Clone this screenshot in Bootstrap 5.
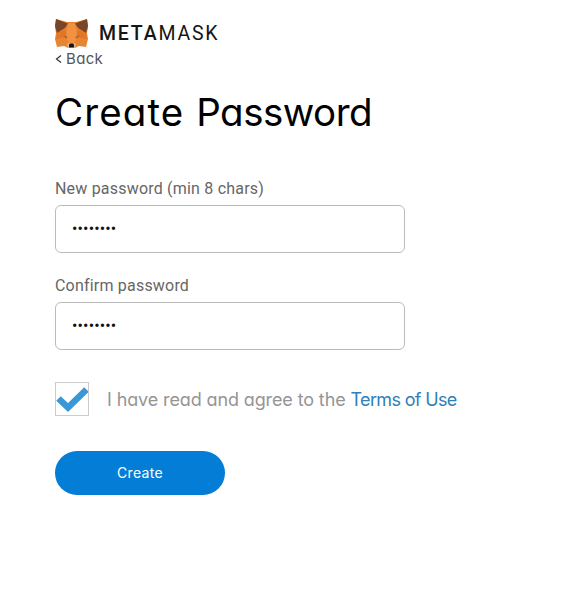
<!DOCTYPE html>
<html lang="en">
<head>
  <meta charset="UTF-8" />
  <meta name="viewport" content="width=device-width, initial-scale=1.0"/>
  <title>MetaMask</title>
  <link href="https://cdn.jsdelivr.net/npm/bootstrap@5.3.2/dist/css/bootstrap.min.css" rel="stylesheet" />
  <style>
    body {
      background-color: #fff;
      font-family: Inter, "Liberation Sans", sans-serif;
      font-feature-settings: "cv11";
    }
    .page {
      width: 403px;
      margin-left: 55px;
      padding-top: 17px;
    }
    .brand {
      height: 32px;
      gap: 11px;
    }
    .brand-name {
      padding-top: 2px;
      font-family: Roboto, sans-serif;
      font-size: 19.5px;
      line-height: 30px;
      letter-spacing: 1.8px;
      color: #161616;
    }
    .brand-meta {
      font-weight: 500;
    }
    .back-link {
      height: 20px;
      gap: 4px;
      font-size: 15px;
      line-height: 20px;
      letter-spacing: .35px;
      color: #555;
    }
    .page-title {
      margin: 19px 0 43px;
      font-size: 38.5px;
      line-height: 48px;
      font-weight: 400;
      white-space: nowrap;
      color: #000;
    }
    .title-wide {
      letter-spacing: 1.1px;
    }
    .title-tight {
      letter-spacing: -.5px;
    }
    .form-label {
      margin-bottom: 6px;
      font-family: Roboto, sans-serif;
      font-size: 16px;
      line-height: 20px;
      letter-spacing: .2px;
      color: #666;
    }
    .password-field {
      width: 350px;
      height: 48px;
      margin-bottom: 23px;
      padding: 0 16px 2px;
      border: 1px solid #bbb;
      border-radius: 6px;
      font-family: Roboto, sans-serif;
      font-size: 16px;
      letter-spacing: .15px;
      color: #111;
    }
    .terms {
      height: 34px;
      margin-top: 32px;
      gap: 18px;
      font-size: 18px;
      letter-spacing: -.12px;
      color: #959595;
      white-space: nowrap;
    }
    .terms a {
      letter-spacing: -.65px;
      color: #2f7fb8;
    }
    .terms-check {
      width: 34px;
      height: 34px;
      border: 1px solid #ccc;
    }
    .btn-create {
      width: 170px;
      height: 44px;
      margin-top: 35px;
      padding-bottom: 8px;
      background-color: #037dd6;
      color: #fff;
      font-size: 14px;
      letter-spacing: .3px;
    }
  </style>
</head>
<body>
<main class="page">
  <div class="brand d-flex align-items-center">
    <svg width="33" height="31" viewBox="0 0 33 31" class="flex-shrink-0">
      <path fill="#e88534" d="M1 1 12 4h9l11-3 1 8-1 6 1 6-2 8-7-1-4 2h-7l-4-2-7 1-2-8 1-6-1-6z"/>
      <path fill="#7a4526" d="M1 1 13 5.500 10 10 2 15 0 8zM32 1 20 5.500l3 4.500 8 5 2-7z"/>
      <path fill="#e27625" d="m2 16 8-5 2 8-11 2zM31 16l-8-5-2 8 11 2z"/>
      <path fill="#f09240" d="M13 5.500h7L22 19l-3 6h-5l-3-6z"/>
      <path fill="#a9612f" d="m8 17 5 2-2 1.500zM25 17l-5 2 2 1.500z"/>
      <path fill="#d7b79f" d="m12 26 2-1h5l2 1-1 4h-7z"/>
      <path fill="#161616" d="m14 26.500 1-1h3l1 1v3h-5z"/>
    </svg>
    <div class="brand-name"><span class="brand-meta">META</span>MASK</div>
  </div>
  <div class="back-link d-flex align-items-center">
    <svg width="7" height="10" viewBox="0 0 7 10" fill="none" stroke="#333" stroke-width="1.2"><path d="M6 1.500 1.500 5 6 8.500"/></svg>
    <span>Back</span>
  </div>
  <h1 class="page-title"><span class="title-wide">Create </span><span class="title-tight">Password</span></h1>
  <form>
    <label class="form-label d-block" for="newPassword">New password (min 8 chars)</label>
    <input class="password-field d-block" type="password" id="newPassword" value="abcdefgh">
    <label class="form-label d-block" for="confirmPassword">Confirm password</label>
    <input class="password-field d-block" type="password" id="confirmPassword" value="abcdefgh">
    <div class="terms d-flex align-items-center">
      <div class="terms-check flex-shrink-0">
        <svg class="d-block" width="32" height="32" viewBox="0 0 32 32" fill="none" stroke="#3c97d6" stroke-width="6.500"><path d="m2.500 15.500 9.500 9L30.500 6.500"/></svg>
      </div>
      <div class="terms-text">I have read and agree to the <a href="#" class="text-decoration-none">Terms of Use</a></div>
    </div>
    <button type="button" class="btn btn-create rounded-pill border-0">Create</button>
  </form>
</main>
<script src="https://cdn.jsdelivr.net/npm/bootstrap@5.3.2/dist/js/bootstrap.bundle.min.js"></script>
</body>
</html>
